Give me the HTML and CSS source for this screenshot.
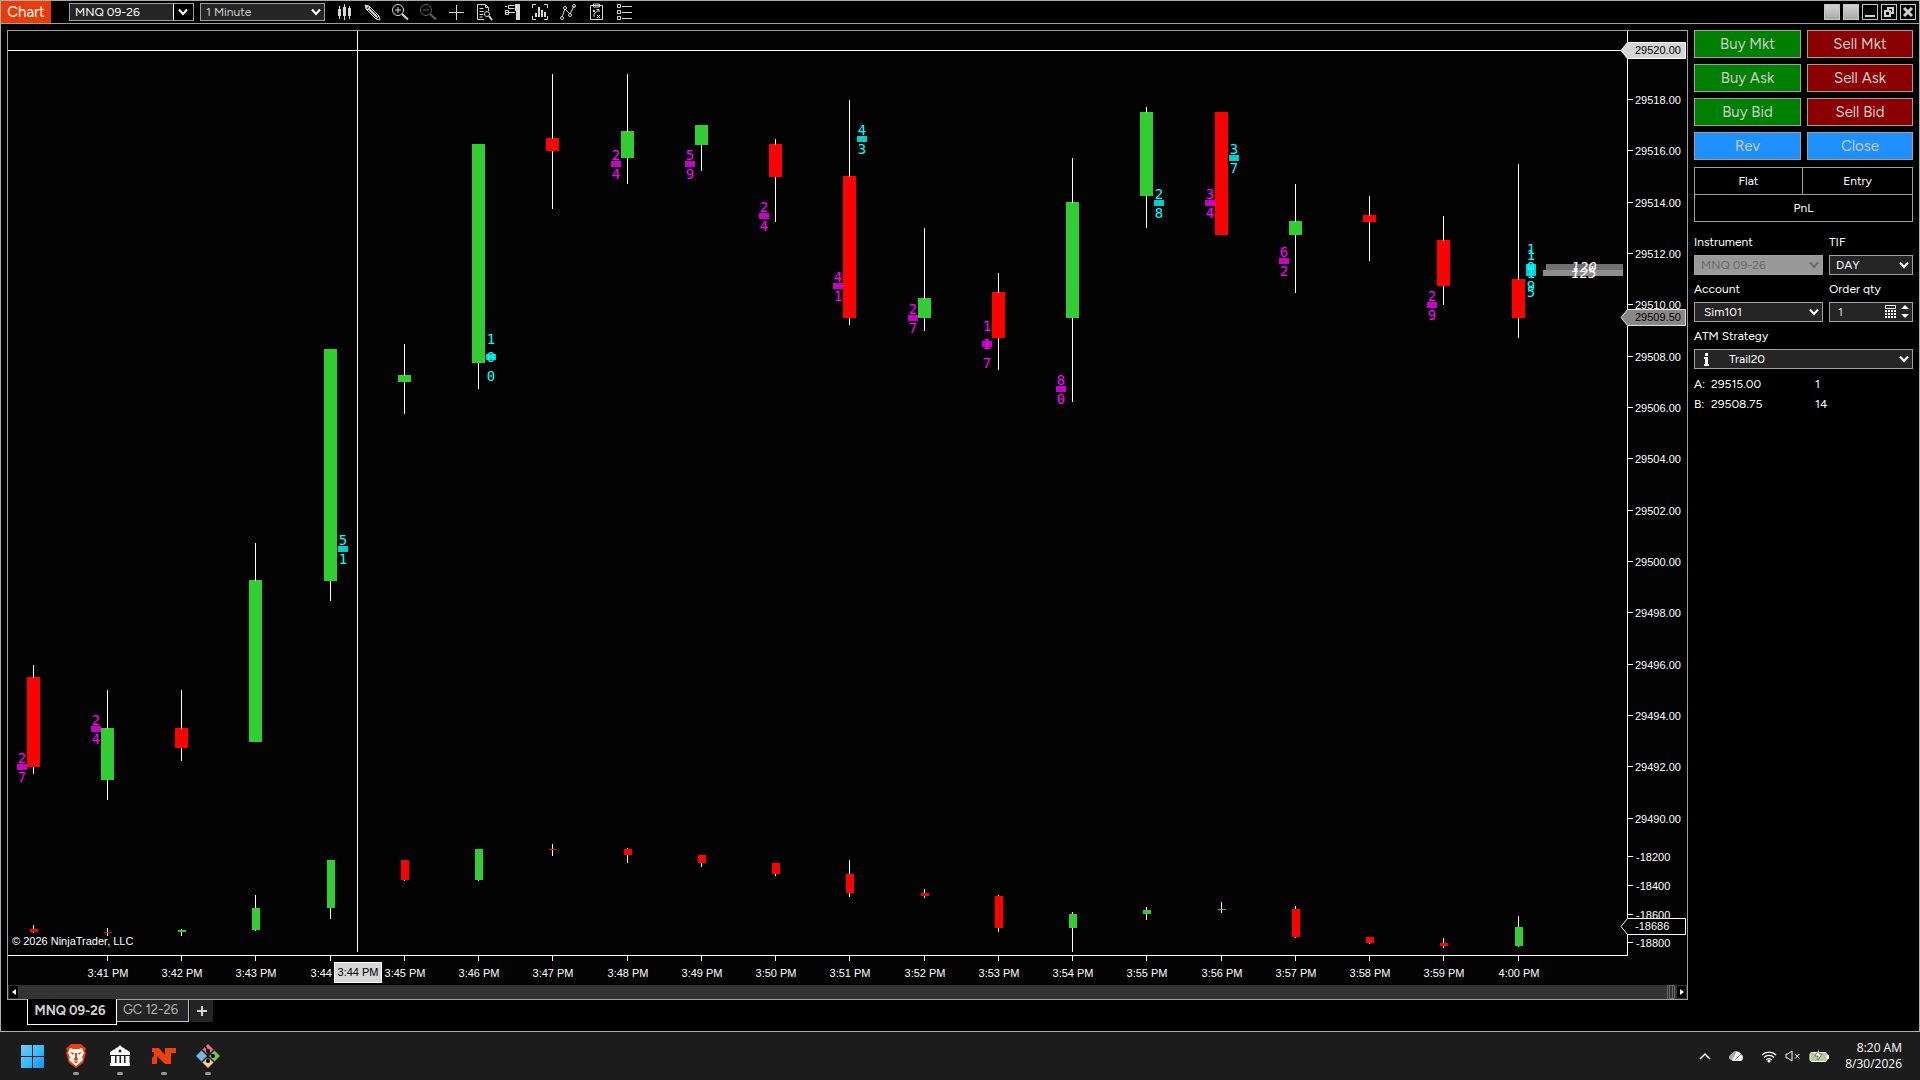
FILE: index.html
```html
<!DOCTYPE html>
<html lang="en">
<head>
<meta charset="utf-8">
<title>Chart - MNQ 09-26</title>
<link rel="stylesheet" href="styles.css">
</head>
<body>
<div class="window">
  <header class="titlebar">
    <h1 class="app-name">Chart</h1>
    <div class="combo combo-split toolbar-combo">
      <select aria-label="Chart instrument"><option>MNQ 09-26</option></select>
      <svg class="chevron" viewBox="0 0 10 8"><path d="M1 1.500L5 6L9 1.500"/></svg>
    </div>
    <div class="combo toolbar-combo interval">
      <select aria-label="Interval"><option>1 Minute</option></select>
      <svg class="chevron" viewBox="0 0 10 8"><path d="M1 1.500L5 6L9 1.500"/></svg>
    </div>
    <nav class="tools" aria-label="Chart tools">
      <button aria-label="Chart style"><svg viewBox="0 0 18 18"><path d="M4.500 3v13M9.500 1v16M14.500 3v13"/><path class="fill" d="M3 6h3v7H3zM8 4h3v9H8zM13 5h3v8h-3z"/></svg></button>
      <button aria-label="Drawing tools"><svg viewBox="0 0 18 18"><path d="M2 2l4 1 10 10-3 3L3 6zM4 7l3-3M5 5l9 9M16 13l1 4-4-1"/><path class="thick" d="M5 5l9 9"/><path class="fill" d="M2 2l4 1-3 3z"/></svg></button>
      <button aria-label="Zoom in"><svg viewBox="0 0 18 18"><circle cx="7" cy="7" r="5.500"/><path d="M4 7h6M7 4v6"/><path class="thick" d="M11 11l6 5.500"/></svg></button>
      <button aria-label="Zoom out" disabled><svg viewBox="0 0 18 18"><circle cx="7" cy="7" r="5.500"/><path d="M4 7h6"/><path class="thick" d="M11 11l6 5.500"/></svg></button>
      <button aria-label="Crosshair"><svg viewBox="0 0 18 18"><path d="M9.500 2v15M2 9.500h15"/></svg></button>
      <button aria-label="Data box"><svg viewBox="0 0 18 18"><path d="M9 16.500H2.500v-15h8l3 3V8M4.500 5.500h4M4.500 8.500h4M4.500 11.500h4M4.500 14h3M10.500 1.500v3h3"/><circle cx="12" cy="11" r="2.500"/><path class="thick" d="M14 13l3 4"/></svg></button>
      <button aria-label="Chart trader"><svg viewBox="0 0 18 18"><path class="fill" d="M12 1h5v16h-4V8h-1z"/><path d="M2 3.500h2M5.500 2.500h6M5.500 5.500h6M5.500 2.500v3M2 9.500h10M2.500 7.500h3v4h-3z"/></svg></button>
      <button aria-label="Data series"><svg viewBox="0 0 18 18"><path d="M5 1.500H1.500V5M13 1.500h3.500V5M5 16.500H1.500V13M13 16.500h3.500V13"/><path class="thick" d="M5 14v-4M8 14V4M11 14V7M14 14V9"/></svg></button>
      <button aria-label="Indicators"><svg viewBox="0 0 18 18"><path d="M3 14L6 6l5 5 4-8"/><g class="dots"><circle cx="3" cy="15" r="1.500"/><circle cx="6" cy="5" r="1.500"/><circle cx="11" cy="12" r="1.500"/><circle cx="15" cy="3" r="1.500"/></g></svg></button>
      <button aria-label="Strategies"><svg viewBox="0 0 18 18"><path d="M3.500 2.500h12v14h-12zM6.500 1h6v3h-6zM6 7l2 2M8 7l-2 2M10 12l3 3M13 12l-3 3M7 14V11l5-4M9.500 6.500H12V9"/></svg></button>
      <button aria-label="Properties"><svg viewBox="0 0 18 18"><path d="M2.500 1.500h3v3h-3zM2.500 7.500h3v3h-3zM2.500 13.500h3v3h-3zM7 3.500h10M7 9.500h10M7 15.500h10"/></svg></button>
    </nav>
    <div class="window-buttons">
      <button class="blank" aria-label="Instrument link"></button>
      <button class="blank" aria-label="Interval link"></button>
      <button aria-label="Minimize"><svg viewBox="0 0 14 14"><path d="M2 11h10"/></svg></button>
      <button aria-label="Restore"><svg viewBox="0 0 14 14"><path d="M3 6h5v5H3zM6 6V3h5v5H8"/></svg></button>
      <button aria-label="Close window"><svg viewBox="0 0 14 14"><path class="cross" d="M3 3l8 8M11 3l-8 8"/></svg></button>
    </div>
  </header>

  <main class="workspace">
    <section class="chart-column">
      <div class="chart-frame">
        <svg id="chart" class="chart" viewBox="8 31 1679 954" role="img" aria-label="MNQ 09-26 one minute candles"></svg>
        <div class="scrollbar">
          <button aria-label="Scroll left"><svg viewBox="0 0 4 6"><path d="M4 0L0 3L4 6z"/></svg></button>
          <span class="thumb"></span>
          <button aria-label="Scroll right"><svg viewBox="0 0 4 6"><path d="M0 0L4 3L0 6z"/></svg></button>
        </div>
      </div>
      <div class="tabs">
        <button class="tab active">MNQ 09-26</button>
        <button class="tab">GC 12-26</button>
        <button class="tab-add" aria-label="Add tab"><svg viewBox="0 0 10 10"><path d="M5 0v10M0 5h10"/></svg></button>
      </div>
    </section>

    <aside class="trader">
      <div class="orders">
        <button class="buy">Buy Mkt</button><button class="sell">Sell Mkt</button>
        <button class="buy">Buy Ask</button><button class="sell">Sell Ask</button>
        <button class="buy">Buy Bid</button><button class="sell">Sell Bid</button>
        <button class="neutral">Rev</button><button class="neutral">Close</button>
      </div>
      <div class="position">
        <span>Flat</span><span>Entry</span><span class="pnl">PnL</span>
      </div>
      <form class="fields">
        <div class="field">
          <label for="instrument">Instrument</label>
          <div class="combo disabled"><select id="instrument" disabled><option>MNQ 09-26</option></select><svg class="chevron" viewBox="0 0 10 8"><path d="M1 1.500L5 6L9 1.500"/></svg></div>
        </div>
        <div class="field">
          <label for="tif">TIF</label>
          <div class="combo"><select id="tif"><option>DAY</option></select><svg class="chevron" viewBox="0 0 10 8"><path d="M1 1.500L5 6L9 1.500"/></svg></div>
        </div>
        <div class="field">
          <label for="account">Account</label>
          <div class="combo account"><select id="account"><option>Sim101</option></select><svg class="chevron" viewBox="0 0 10 8"><path d="M1 1.500L5 6L9 1.500"/></svg></div>
        </div>
        <div class="field">
          <label for="qty">Order qty</label>
          <div class="combo qty"><input id="qty" type="text" value="1">
            <svg class="qty-icons" viewBox="0 0 24 14"><path d="M.5.5h10v3H.5z" fill="none" stroke="#fff"/><path d="M0 5h2v2H0zM3 5h2v2H3zM6 5h2v2H6zM9 5h2v2H9zM0 8h2v2H0zM3 8h2v2H3zM6 8h2v2H6zM9 8h2v2H9zM0 11h2v2H0zM3 11h2v2H3zM6 11h2v2H6zM9 11h2v2H9zM16 4l4-4 4 4zM16 9h8l-4 4z" fill="#fff"/></svg>
          </div>
        </div>
        <div class="field wide">
          <label for="atm">ATM Strategy</label>
          <div class="combo atm"><select id="atm"><option>Trail20</option></select>
            <svg class="info" viewBox="0 0 6 13"><path d="M1 0h3v3H1zM0 4h4v7h1v2H0v-2h1V6H0z" fill="#fff"/></svg>
            <svg class="chevron" viewBox="0 0 10 8"><path d="M1 1.500L5 6L9 1.500"/></svg></div>
        </div>
      </form>
      <dl class="quotes">
        <dt>A:</dt><dd>29515.00</dd><dd>1</dd>
        <dt>B:</dt><dd>29508.75</dd><dd>14</dd>
      </dl>
    </aside>
  </main>
</div>

<footer class="taskbar">
  <div class="apps">
    <button aria-label="Start"><svg viewBox="0 0 24 24"><defs><linearGradient id="win" x2="1" y2="1"><stop stop-color="#7cc4f0"/><stop offset=".5" stop-color="#35c1fb"/><stop offset="1" stop-color="#1590f5"/></linearGradient></defs><path fill="url(#win)" d="M1 1h11v11H1zM13 1h11v11H13zM1 13h11v11H1zM13 13h11v11H13z"/></svg></button>
    <button class="running" aria-label="Brave"><svg viewBox="0 0 24 24"><path fill="#f03c0c" d="M7 0h10l3 3 2 1-1 3 1 2-3 10-7 5-7-5L2 9l1-2-1-3 2-1z"/><path fill="#fff" d="M6 4l3 1h6l3-1 2 5-2 4 1 3-7 6-7-6 1-3-2-4z"/><path fill="#f03c0c" d="M6 8l4 1-1 2zM18 8l-4 1 1 2zM11 9h2v5l2 1-3 2-3-2 2-1zM9 18l3-1 3 1-3 1z"/></svg></button>
    <button class="running" aria-label="Bank"><svg viewBox="0 0 24 24"><path fill="#fff" d="M12 1l2 2 8 5v3H2V8l8-5zM3 12h4v8H3zM8.500 12h3v8h-3zM13 12h3v8h-3zM17.500 12h4v8h-4zM2 19h20v3H2z"/><circle cx="12" cy="7" r="1.500" fill="#222"/></svg></button>
    <button class="running" aria-label="NinjaTrader"><svg viewBox="0 0 24 24"><path fill="#ee4008" d="M0 4h7l6 7V4h11v5h-5v11h-6L5 12v8H0v-6l2-2V8H0z"/></svg></button>
    <button class="running" aria-label="Git"><svg viewBox="0 0 24 24"><path fill="#e87080" d="M12 0l6 6-6 6-6-6z"/><path fill="#74b8e8" d="M6 6l6 6-6 6-6-6z"/><path fill="#80c050" d="M18 6l6 6-6 6-6-6z"/><path fill="#f8cc90" d="M12 12l6 6-6 6-6-6z"/><path stroke="#1c1c1c" stroke-width="1.500" fill="none" d="M9 2l3 5v10M12 8l5 4M6 6l12 12M18 6L6 18"/><circle cx="12" cy="7" r="2"/><circle cx="12" cy="17" r="2"/><circle cx="17" cy="12" r="2"/></svg></button>
  </div>
  <div class="tray">
    <svg class="tray-up" viewBox="0 0 12 8"><path d="M1 7l5-5 5 5" fill="none" stroke="#fff" stroke-width="1.500"/></svg>
    <svg class="tray-cloud" viewBox="0 0 16 12"><path fill="#f2f2f2" d="M4 11a4 4 0 0 1-1-7 5 5 0 0 1 9 0 4 4 0 0 1 0 7z"/><path fill="#aaa" d="M0 8a4 4 0 0 1 3-4 5 5 0 0 1 5-3L3 10a4 4 0 0 1-3-2z"/><path stroke="#999" d="M6 10l6-6"/></svg>
    <svg class="tray-wifi" viewBox="0 0 16 13"><path d="M1 5a10 10 0 0 1 14 0M3 7.500a7 7 0 0 1 10 0M5 10a4 4 0 0 1 6 0" fill="none" stroke="#fff" stroke-width="1.300"/><circle cx="8" cy="11" r="1.500" fill="#fff"/></svg>
    <svg class="tray-sound" viewBox="0 0 16 12"><path d="M1 4h2l4-3v10L3 8H1zM10 4l4.500 4.500M14.500 4L10 8.500" fill="none" stroke="#fff"/></svg>
    <svg class="tray-battery" viewBox="0 0 20 14"><rect x="1" y="3.500" width="17" height="9" rx="2" fill="#b5cc96" stroke="#fff"/><path d="M19 6v4" stroke="#fff" stroke-width="2"/><path d="M10 0L6 7h3v4l4-6h-3z" fill="#fff" stroke="#1c1c1c" stroke-width=".5"/></svg>
    <time class="clock">8:20 AM<br>8/30/2026</time>
  </div>
</footer>
<script src="chart.js"></script>
</body>
</html>
```
FILE: styles.css
```css
* { box-sizing: border-box; }

body {
  margin: 0;
  min-height: 100vh;
  display: flex;
  flex-direction: column;
  background: #000;
  color: #fff;
  font-family: "Figtree", Inter, "Liberation Sans", sans-serif;
  font-size: 12px;
}

button, select, input { font: inherit; color: inherit; margin: 0; }
button { padding: 0; border: 0; background: none; }
svg { display: block; }

.window {
  flex: 1;
  display: flex;
  flex-direction: column;
  border: 1px solid #a9adae;
}

/* Title bar */
.titlebar {
  display: flex;
  align-items: center;
  height: 23px;
  padding-right: 3px;
  border-bottom: 1px solid #a0a0a0;
}
.app-name {
  margin: 0 18px 0 0;
  width: 50px;
  line-height: 22px;
  text-align: center;
  font-size: 15px;
  font-weight: 400;
  background: #e83c06;
}
.combo {
  display: grid;
  align-items: center;
  height: 20px;
  border: 1px solid #a0a0a0;
  background: #252525;
}
.combo > * { grid-area: 1 / 1; }
.combo select, .combo input {
  appearance: none;
  width: 100%;
  height: 18px;
  padding: 0 5px;
  border: 0;
  border-radius: 0;
  background: none;
}
.chevron {
  width: 10px;
  height: 8px;
  justify-self: end;
  margin-right: 3px;
  pointer-events: none;
  fill: none;
  stroke: #fff;
  stroke-width: 2;
}
.toolbar-combo { width: 125px; height: 18px; margin-right: 6px; }
.toolbar-combo select { height: 16px; }
.combo-split { background: linear-gradient(to left, #000 19px, #fff 19px, #fff 20px, #252525 20px); }
.combo-split .chevron { margin-right: 5px; }
.interval { color: #d0d0d0; margin-right: 5px; }

.tools { display: flex; }
.tools button { width: 28px; display: grid; place-items: center; }
.tools svg { width: 18px; height: 18px; fill: none; stroke: #d8d8d8; }
.tools button:disabled { opacity: .45; }
.tools .fill { fill: #d8d8d8; stroke: none; }
.tools .thick { stroke-width: 2; }

.window-buttons { display: flex; gap: 3px; margin-left: auto; }
.window-buttons button {
  width: 16px;
  height: 16px;
  border: 1px solid #c8c8c8;
}
.window-buttons .blank { background: linear-gradient(#d4d4d4, #a8a8a8); }
.window-buttons svg { width: 14px; height: 14px; fill: none; stroke: #d0d0d0; stroke-width: 2; }
.window-buttons .cross { stroke-width: 3; }

/* Chart */
.workspace {
  flex: 1;
  display: flex;
  align-items: flex-start;
  gap: 6px;
  padding: 6px;
}
.chart-column { flex: 1; min-width: 0; }
.chart-frame { border: 1px solid #a0a0a0; background: #030303; }
.chart {
  width: 100%;
  height: auto;
  font-family: "Liberation Sans", Arial, sans-serif;
  font-size: 11px;
  fill: #fff;
}
.wick { fill: #fff; }
.up { fill: #32cd32; }
.down { fill: #f00; }
.bid { fill: #c800c8; }
.ask { fill: #00cdcd; }
.digits { font: 14px "DejaVu Sans Mono", monospace; text-anchor: middle; }
.bid-text { fill: #f0f; }
.ask-text { fill: #0ff; }
.volume-text { font: italic 14px "DejaVu Sans Mono", monospace; text-anchor: middle; }
.time { text-anchor: middle; }
.dark-text { fill: #000; }
.cursor-tag { fill: #d6d6d6; stroke: #fff; }
.price-tag { fill: #8c8787; stroke: #e0e0e0; }
.line-tag { fill: #000; stroke: #fff; }

.scrollbar {
  display: flex;
  justify-content: flex-end;
  height: 14px;
  background: #333;
}
.scrollbar button {
  width: 11px;
  border: 1px solid #333;
  background: #000;
  display: grid;
  place-items: center;
}
.scrollbar button:first-child { margin-right: auto; }
.scrollbar button svg { width: 4px; height: 6px; fill: #fff; }
.thumb { width: 8px; margin-right: 1px; border: 3px double #666; border-top: 1px solid #666; border-bottom: 1px solid #666; }

.tabs { display: flex; align-items: flex-start; padding-left: 20px; }
.tab {
  width: 72px;
  height: 22px;
  padding: 0 4px 2px 0;
  border: 1px solid #c0c0c0;
  border-top: 0;
  border-left: 0;
  background: #242424;
  color: #b8b8b8;
  font-size: 13px;
}
.tab.active {
  position: relative;
  margin-top: -1px;
  width: 90px;
  height: 26px;
  border: 1px solid #fff;
  border-top: 0;
  background: #000;
  color: #d0d0d0;
  font-weight: 700;
}
.tab-add { margin-left: 1px; width: 23px; height: 22px; background: #242424; display: grid; place-items: center; }
.tab-add svg { width: 10px; height: 10px; stroke: #d8d8d8; stroke-width: 2; }

/* Chart trader */
.trader { width: 219px; }
.orders { display: grid; grid-template-columns: 107px 1fr; gap: 6px; }
.orders button {
  height: 28px;
  border: 1px solid #a0a0a0;
  color: #ccc;
  font-size: 15px;
}
.orders .buy { background: #008000; }
.orders .sell { background: #8b0000; }
.orders .neutral { background: #1e90ff; }

.position {
  display: grid;
  grid-template-columns: 107px 1fr;
  gap: 1px;
  margin-top: 7px;
  padding: 1px;
  background: #a0a0a0;
  text-align: center;
  line-height: 26px;
}
.position span { background: #000; }
.position .pnl { grid-column: 1 / -1; }

.fields {
  display: grid;
  grid-template-columns: 129px 1fr;
  gap: 4px 6px;
  margin-top: 10px;
}
.field label { display: block; line-height: 20px; padding-bottom: 3px; }
.wide { grid-column: 1 / -1; }
.fields .combo select, .fields .combo input { padding: 0 6px; }
.combo.disabled { background: #999; color: #6a6a6a; }
.combo.disabled select { opacity: 1; color: #6a6a6a; }
.combo.disabled .chevron { stroke: #6a6a6a; }
.fields .account select { padding-left: 9px; }
.fields .atm select { padding-left: 34px; }
.fields .qty input { padding-left: 8px; color: #ddd; }
.qty-icons { width: 24px; height: 14px; justify-self: end; margin-right: 3px; }
.info { width: 6px; height: 13px; margin-left: 9px; }

.quotes {
  display: grid;
  grid-template-columns: 17px 104px 1fr;
  margin: 5px 0 0;
  line-height: 20px;
}
.quotes dd { margin: 0; }

/* Taskbar */
.taskbar {
  height: 48px;
  display: flex;
  justify-content: space-between;
  background: #1c1c1c;
  padding: 0 18px 0 10px;
}
.apps { display: flex; }
.apps button {
  width: 44px;
  display: flex;
  flex-direction: column;
  align-items: center;
  padding-top: 12px;
}
.apps svg { width: 24px; height: 24px; }
.apps .running::after {
  content: "";
  width: 6px;
  height: 3px;
  margin-top: 4px;
  border-radius: 2px;
  background: #999;
}
.tray { display: flex; align-items: center; }
.tray-up { width: 12px; height: 8px; margin-right: 18px; }
.tray-cloud { width: 16px; height: 12px; margin-right: 16px; }
.tray-wifi { width: 16px; height: 13px; margin-right: 8px; }
.tray-sound { width: 16px; height: 12px; margin-right: 8px; }
.tray-battery { width: 20px; height: 14px; margin-right: 16px; }
.clock {
  font: 12px/16px "Open Sans", sans-serif;
  text-align: right;
}
```
FILE: chart.js
```js
const svg = document.getElementById("chart");
const NS = "http://www.w3.org/2000/svg";

function add(tag, attrs, text) {
  const el = document.createElementNS(NS, tag);
  for (const key in attrs) el.setAttribute(key, attrs[key]);
  if (text !== undefined) el.textContent = text;
  svg.appendChild(el);
}
function rect(cls, x, y, width, height) {
  add("rect", { class: cls, x, y, width, height });
}
const barX = i => Math.floor(33 + 74.25 * i);

/* Each bar: direction, high, body top, body bottom, low */
const price = [
  ["down", 665, 677, 767, 774], ["up", 690, 728, 780, 800], ["down", 690, 728, 748, 761],
  ["up", 543, 580, 742, 742], ["up", 349, 349, 581, 601], ["up", 344, 375, 382, 414],
  ["up", 144, 144, 363, 389], ["down", 74, 138, 151, 209], ["up", 74, 131, 158, 184],
  ["up", 125, 125, 145, 171], ["down", 139, 144, 177, 222], ["down", 100, 176, 318, 325],
  ["up", 228, 298, 318, 331], ["down", 273, 292, 338, 370], ["up", 158, 202, 318, 402],
  ["up", 107, 112, 196, 228], ["down", 112, 112, 235, 235], ["up", 184, 221, 235, 293],
  ["down", 196, 215, 222, 261], ["down", 216, 240, 286, 305], ["down", 164, 279, 318, 338]
];
const delta = [
  ["down", 925, 929, 932, 933], ["down", 928, 932, 933, 936], ["up", 929, 930, 932, 936],
  ["up", 895, 908, 930, 931], ["up", 860, 860, 908, 919], ["down", 860, 860, 880, 881],
  ["up", 849, 849, 880, 881], ["down", 844, 849, 850, 856], ["down", 848, 849, 855, 863],
  ["down", 855, 855, 863, 867], ["down", 863, 863, 874, 876], ["down", 860, 874, 893, 897],
  ["down", 889, 893, 896, 898], ["down", 895, 896, 928, 932], ["up", 912, 914, 928, 952],
  ["up", 907, 910, 914, 920], ["up", 902, 909, 910, 913], ["down", 906, 909, 937, 938],
  ["down", 937, 937, 943, 944], ["down", 938, 943, 946, 948], ["up", 916, 927, 946, 947]
];
function candles(bars, offset, width) {
  bars.forEach(([dir, high, top, bottom, low], i) => {
    const x = barX(i);
    rect(dir, x - offset, top, width, bottom - top);
    if (high < top) rect("wick", x, high, 1, top - high + (width > 8 ? 1 : 0));
    if (low > bottom) rect("wick", x, bottom, 1, low - bottom);
  });
}
candles(price, 6, 13);
candles(delta, 3, 8);

/* Imbalance marks: bar, side, block top, digits */
[
  [0, "bid", 764, "27"], [1, "bid", 726, "24"], [4, "ask", 546, "51"], [6, "ask", 354, "100"],
  [8, "bid", 161, "24"], [9, "bid", 161, "59"], [10, "bid", 213, "24"], [11, "bid", 283, "41"],
  [11, "ask", 136, "43"], [12, "bid", 315, "27"], [13, "bid", 341, "117"], [14, "bid", 386, "80"],
  [15, "ask", 200, "28"], [16, "bid", 200, "34"], [16, "ask", 155, "37"], [17, "bid", 258, "62"],
  [19, "bid", 302, "29"], [20, "ask", 264, "109"], [20, "ask", 270, "115"]
].forEach(([i, side, top, digits]) => {
  const x = barX(i) + (side === "bid" ? -16 : 8);
  const lines = digits.length === 2 ? [-1, 18] : [-10, 8, 27];
  rect(side, x, top, 10, 6);
  lines.forEach((dy, n) => add("text", { class: "digits " + side + "-text", x: x + 5, y: top + dy }, digits[n]));
});

/* Volume at price */
add("rect", { x: 1546, y: 264, width: 77, height: 6, fill: "#707070" });
add("rect", { x: 1543, y: 270, width: 80, height: 6, fill: "#8e8e8e" });
add("text", { class: "volume-text", x: 1584, y: 272 }, "120");
add("text", { class: "volume-text", x: 1584, y: 278 }, "125");

/* Axes */
rect("wick", 1627, 31, 1, 925);
rect("wick", 8, 955, 1620, 1);
for (let n = 0; n < 15; n++) {
  const y = Math.floor(99.3 + 51.35 * n);
  rect("wick", 1628, y, 5, 1);
  add("text", { x: 1635, y: y + 5 }, (29518 - 2 * n) + ".00");
}
[[856, "-18200"], [885, "-18400"], [914, "-18600"], [942, "-18800"]].forEach(([y, label]) => {
  rect("wick", 1628, y, 5, 1);
  add("text", { x: 1636, y: y + 5 }, label);
});
for (let i = 1; i <= 20; i++) {
  const x = barX(i);
  rect("wick", x, 956, 1, 5);
  add("text", { class: "time", x: x + 1, y: 977 }, i < 20 ? "3:" + (40 + i) + " PM" : "4:00 PM");
}
add("text", { x: 12, y: 945 }, "© 2026 NinjaTrader, LLC");

/* Cursor and value tags */
rect("wick", 8, 50, 1613, 1);
rect("wick", 357, 31, 1, 921);
function tag(cls, top, label, textClass) {
  const y = top + .5;
  add("path", { class: cls, d: `M1621 ${y + 8}L1627.5 ${y}H1685.5V${y + 16}H1627.5z` });
  add("text", { class: textClass, x: 1635, y: top + 12 }, label);
}
tag("cursor-tag", 42, "29520.00", "dark-text");
tag("price-tag", 309, "29509.50", "dark-text");
tag("line-tag", 918, "-18686", "");
add("rect", { class: "cursor-tag", x: 334.5, y: 962.5, width: 47, height: 20 });
add("text", { class: "time dark-text", x: 358, y: 976 }, "3:44 PM");
```
